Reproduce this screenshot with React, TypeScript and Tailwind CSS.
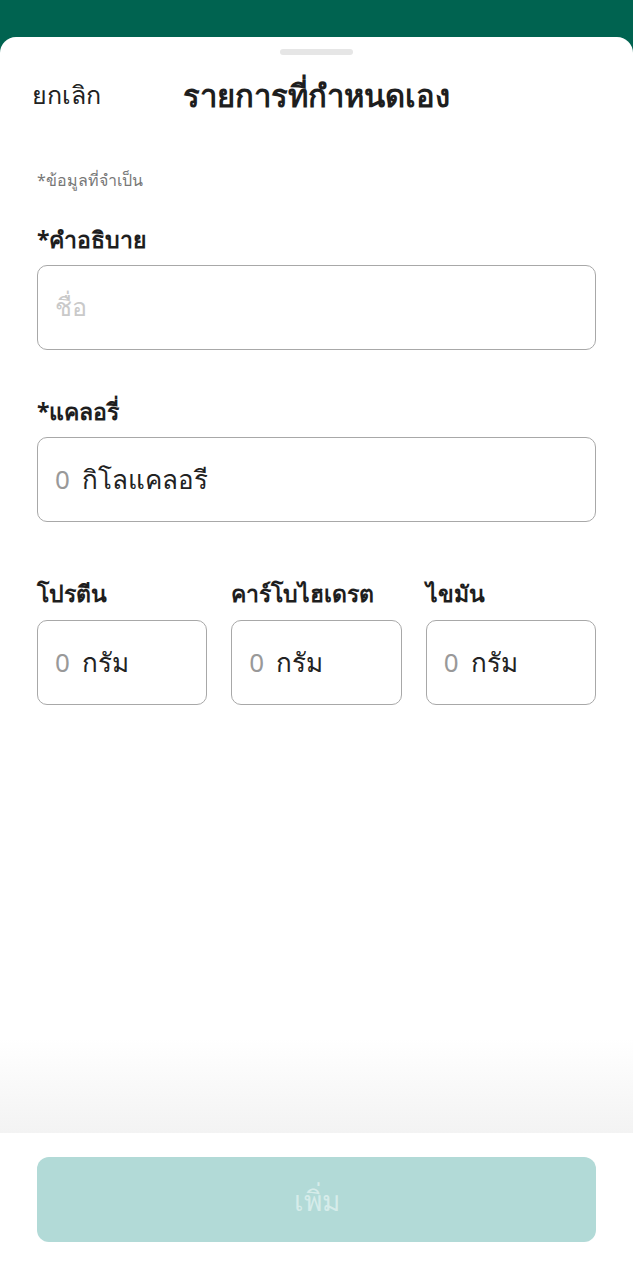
export default function App() {
  const font = { fontFamily: '"Noto Sans", "Liberation Sans", sans-serif' };
  const small = [
    { label: 'โปรตีน' },
    { label: 'คาร์โบไฮเดรต' },
    { label: 'ไขมัน' },
  ];
  return (
    <div className="w-[633px] h-[1280px] bg-[#006350] flex flex-col overflow-hidden" style={font}>
      <div className="h-[37px] shrink-0" />
      <div className="flex-1 bg-white rounded-t-[16px] flex flex-col relative">
        <div className="flex justify-center pt-[12px]">
          <div className="w-[73px] h-[6px] rounded-full bg-[#e6e6e6]" />
        </div>
        <div className="relative h-[60px] flex items-center px-[32px] mt-[10px]">
          <span className="text-[25px] text-[#222]">ยกเลิก</span>
          <span className="absolute left-0 right-0 text-center text-[31px] font-bold text-[#1e1e1e] pointer-events-none">
            รายการที่กำหนดเอง
          </span>
        </div>
        <div className="px-[37px] flex flex-col">
          <div className="mt-[43px] text-[16px] text-[#777]">*ข้อมูลที่จำเป็น</div>
          <div className="mt-[30px] text-[23px] font-bold text-[#1e1e1e]">*คำอธิบาย</div>
          <div className="mt-[8px] h-[85px] rounded-[10px] border-[1.5px] border-[#a8a8a8] flex items-center px-[17px]">
            <span className="text-[25px] text-[#c9c9c9]">ชื่อ</span>
          </div>
          <div className="mt-[44px] text-[23px] font-bold text-[#1e1e1e]">*แคลอรี่</div>
          <div className="mt-[9px] h-[85px] rounded-[10px] border-[1.5px] border-[#a8a8a8] flex items-center px-[17px] gap-[12px]">
            <span className="text-[26px] text-[#999]">0</span>
            <span className="text-[26px] text-[#222]">กิโลแคลอรี</span>
          </div>
          <div className="mt-[54px] grid grid-cols-3 gap-x-[24px]">
            {small.map((s) => (
              <div key={s.label} className="flex flex-col">
                <div className="text-[23px] font-bold text-[#1e1e1e]">{s.label}</div>
                <div className="mt-[9px] h-[85px] rounded-[10px] border-[1.5px] border-[#a8a8a8] flex items-center px-[17px] gap-[12px]">
                  <span className="text-[26px] text-[#999]">0</span>
                  <span className="text-[26px] text-[#222]">กรัม</span>
                </div>
              </div>
            ))}
          </div>
        </div>
        <div className="flex-1" />
        <div className="h-[95px] bg-gradient-to-b from-white to-[#f3f3f3]" />
        <div className="bg-white h-[147px] px-[37px] pt-[24px]">
          <div className="h-[85px] rounded-[12px] bg-[#b2dad7] flex items-center justify-center">
            <span className="text-[28px] text-[#d6ecea]">เพิ่ม</span>
          </div>
        </div>
      </div>
    </div>
  );
}
